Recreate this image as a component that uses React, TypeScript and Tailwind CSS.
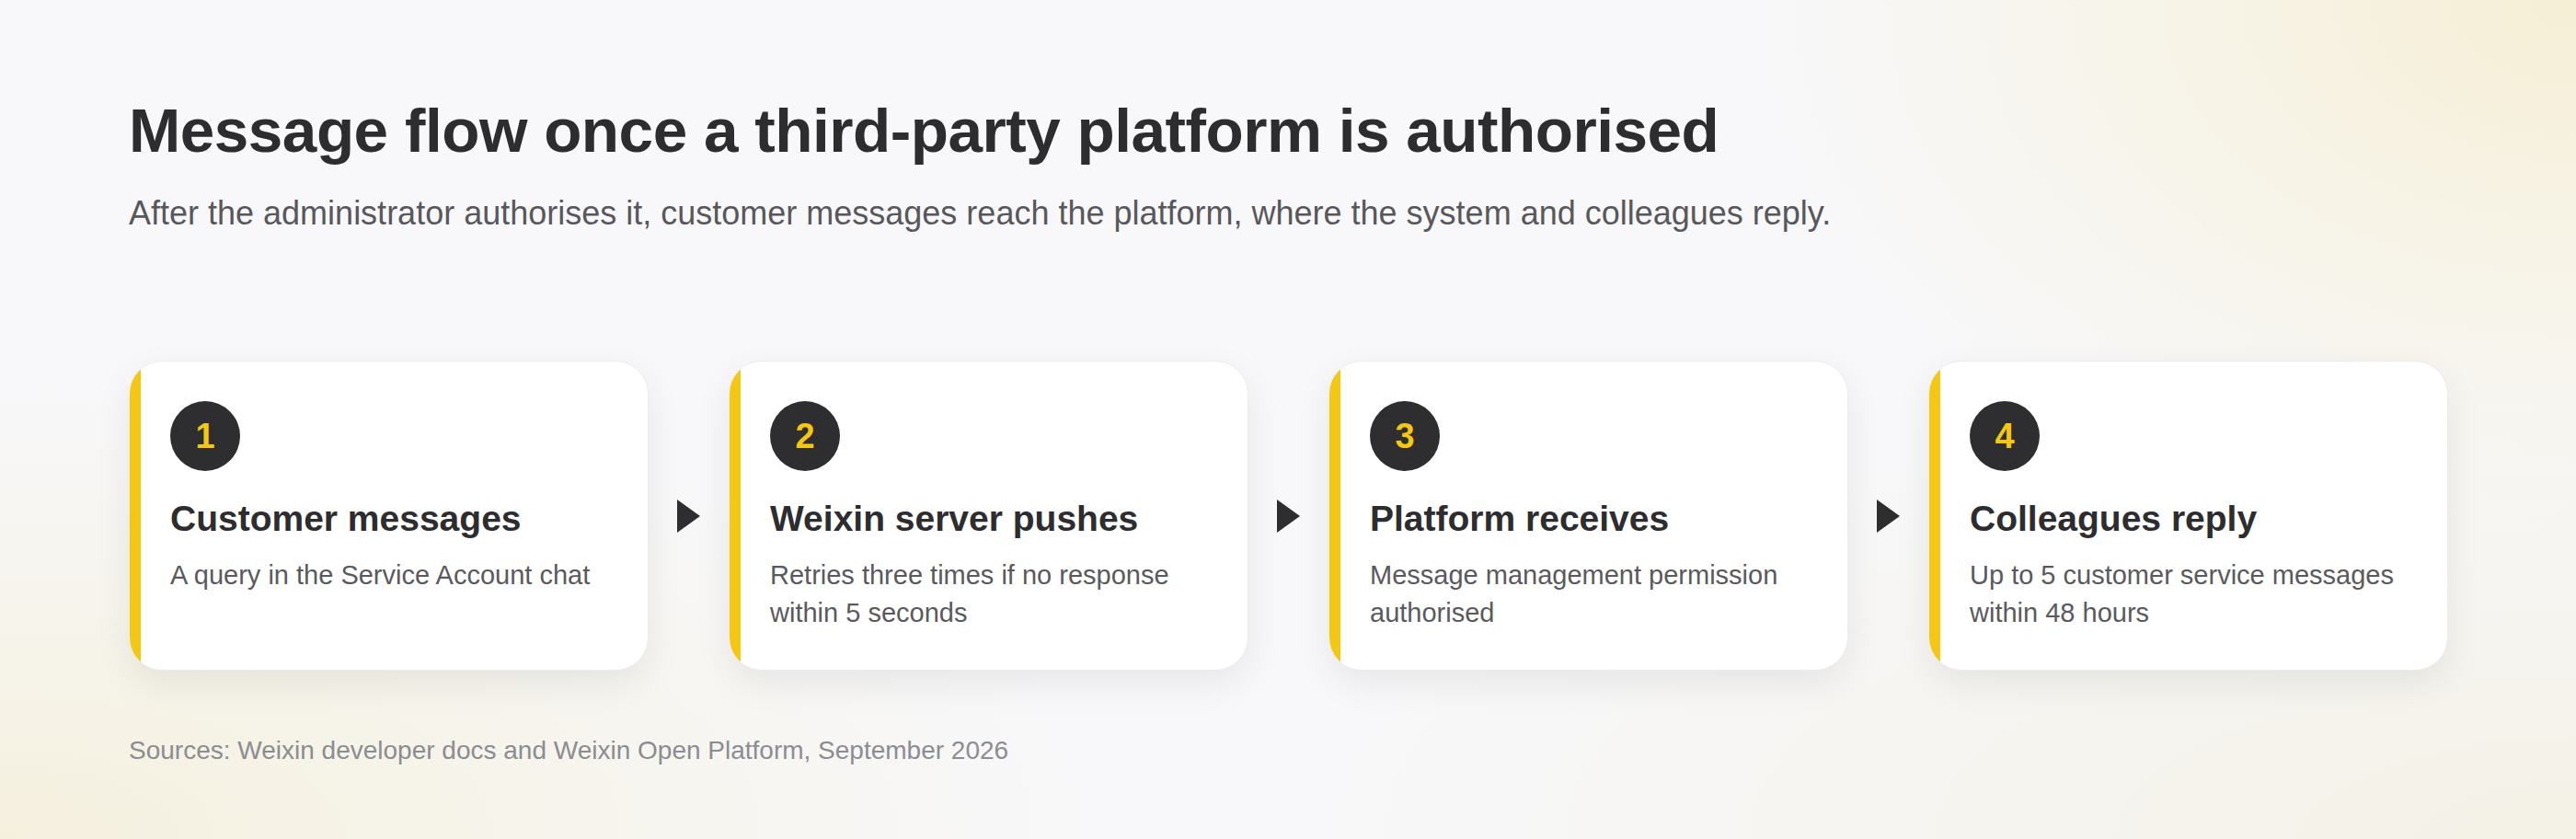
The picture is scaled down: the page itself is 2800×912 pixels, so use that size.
const steps = [
  { n: 1, title: "Customer messages", desc: "A query in the Service Account chat" },
  { n: 2, title: "Weixin server pushes", desc: "Retries three times if no response within 5 seconds" },
  { n: 3, title: "Platform receives", desc: "Message management permission authorised" },
  { n: 4, title: "Colleagues reply", desc: "Up to 5 customer service messages within 48 hours" },
];

function Arrow() {
  return (
    <div className="flex w-[87px] flex-none items-center justify-center">
      <svg width="25" height="36" viewBox="0 0 25 36">
        <path d="M0 0 L25 18 L0 36 Z" fill="#2e2e30" />
      </svg>
    </div>
  );
}

export default function App() {
  return (
    <div
      className="h-[912px] w-[2800px] overflow-hidden bg-[#f8f8fa] pl-[140px] pt-[100px]"
      style={{
        fontFamily: '"Liberation Sans", Arial, sans-serif',
        backgroundImage:
          "radial-gradient(ellipse 900px 600px at 100% 0%, #f6efd6 0%, rgba(247,240,216,0) 100%), radial-gradient(ellipse 1200px 500px at 0% 100%, #f5f0de 0%, rgba(245,240,222,0) 100%), radial-gradient(ellipse 1400px 500px at 100% 100%, #f4f1e6 0%, rgba(244,241,230,0) 100%)",
      }}
    >
      <h1 className="text-[67.5px] font-bold leading-[84px] tracking-[-0.5px] text-[#2d2d2f]">
        Message flow once a third-party platform is authorised
      </h1>
      <p className="mt-[26px] text-[36px] leading-[44px] text-[#58585c]">
        After the administrator authorises it, customer messages reach the platform, where the system and colleagues reply.
      </p>

      {/* Steps */}
      <div className="mt-[138px] flex w-[2521px]">
        {steps.map((s, i) => (
          <div key={s.n} className="flex">
            {i > 0 && <Arrow />}
            <div className="flex h-[337px] w-[565px] overflow-hidden rounded-[36px] border border-[#ececee] bg-white shadow-[0_14px_40px_rgba(0,0,0,0.07)]">
              <div className="w-[12px] flex-none bg-[#f4c812]" />
              <div className="pl-[32px] pr-[30px] pt-[43px]">
                <div className="flex h-[76px] w-[76px] items-center justify-center rounded-full bg-[#2e2e30] text-[38px] font-bold text-[#f4c812]">
                  {s.n}
                </div>
                <h3 className="mt-[28px] text-[39px] font-bold leading-[48px] text-[#2d2d2f]">{s.title}</h3>
                <p className="mt-[17px] text-[29px] leading-[41px] text-[#5a5a5e]">{s.desc}</p>
              </div>
            </div>
          </div>
        ))}
      </div>

      <p className="mt-[70px] text-[28px] leading-[34px] text-[#8b8d92]">
        Sources: Weixin developer docs and Weixin Open Platform, September 2026
      </p>
    </div>
  );
}
